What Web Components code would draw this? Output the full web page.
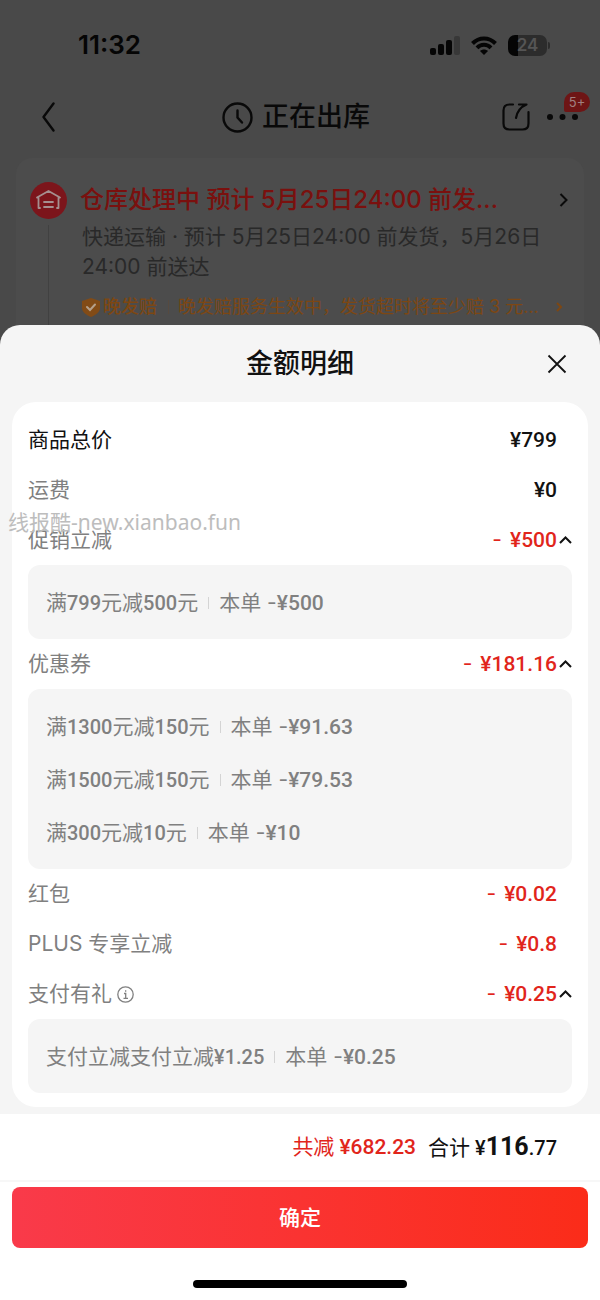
<!DOCTYPE html>
<html lang="zh-CN">
<head>
<meta charset="UTF-8">
<meta name="viewport" content="width=device-width, initial-scale=1">
<title>金额明细</title>
<style>
    body {
        margin: 0;
        background: #494949;
        font-family: Inter, "Noto Sans CJK SC", sans-serif;
        font-size: 21px;
        line-height: 30px;
        color: #111;
    }
</style>
</head>
<body>
<order-page></order-page>

<script>
// Numbers are set in a narrower face than the text round them
function withNumbers(text) {
    return text.replace(/[¥\d][\d.]*/g, '<span class="num">$&</span>');
}

const numStyle = `
    .num {
        font-family: Roboto, sans-serif;
        font-weight: 500;
    }
`;

const buttonReset = `
    button {
        margin: 0;
        padding: 0;
        border: 0;
        background: none;
        color: inherit;
        font: inherit;
        display: flex;
        align-items: center;
        cursor: pointer;
    }
    svg { display: block; flex: none; }
`;

class StatusBar extends HTMLElement {
    constructor() {
        super();
        this.attachShadow({ mode: 'open' });
    }

    connectedCallback() {
        this.shadowRoot.innerHTML = `
            <style>
                :host {
                    display: flex;
                    align-items: center;
                    justify-content: space-between;
                    height: 90px;
                    padding: 0 50px 0 78px;
                    color: #050505;
                }
                .time { font-size: 26px; font-weight: 600; }
                .signs { display: flex; align-items: center; gap: 11px; }
                .battery { display: flex; align-items: center; gap: 1px; }
                .cell {
                    box-sizing: border-box;
                    width: 39px;
                    height: 21px;
                    border-radius: 7px;
                    background: linear-gradient(90deg, #050505 10px, #2c2c2c 10px);
                    color: #555;
                    font-size: 17px;
                    font-weight: 600;
                    line-height: 21px;
                    text-align: center;
                }
                .tip { width: 2px; height: 7px; border-radius: 0 2px 2px 0; background: #2c2c2c; }
                svg { display: block; }
            </style>
            <span class="time">11:32</span>
            <div class="signs">
                <svg width="30" height="19" viewBox="0 0 30 19" fill="#050505">
                    <rect x="0" y="12" width="6" height="7" rx="2"/>
                    <rect x="8" y="8" width="6" height="11" rx="2"/>
                    <rect x="16" y="4" width="6" height="15" rx="2"/>
                    <rect x="24" y="0" width="6" height="19" rx="2" fill="#383838"/>
                </svg>
                <svg width="26" height="19" viewBox="0 0 26 19" fill="none" stroke="#050505" stroke-width="4">
                    <path d="M1.500 7.500C8 .8 18 .8 24.500 7.500"/>
                    <path d="M6 11.800c4-4 10-4 14 0"/>
                    <path d="M13 19l-4-4c2.300-2 5.700-2 8 0z" fill="#050505" stroke="none"/>
                </svg>
                <div class="battery"><div class="cell">24</div><div class="tip"></div></div>
            </div>
        `;
    }
}

class NavBar extends HTMLElement {
    constructor() {
        super();
        this.attachShadow({ mode: 'open' });
    }

    connectedCallback() {
        this.shadowRoot.innerHTML = `
            <style>
                ${buttonReset}
                :host {
                    display: grid;
                    grid-template-columns: 1fr auto 1fr;
                    align-items: center;
                    height: 54px;
                    padding: 0 22px 0 14px;
                    color: #090909;
                }
                .back { padding: 8px 28px; }
                h1 {
                    display: flex;
                    align-items: center;
                    gap: 9px;
                    margin: 0;
                    font-size: 27px;
                    font-weight: 500;
                    line-height: 40px;
                }
                .tools { display: flex; justify-content: flex-end; align-items: center; gap: 17px; }
                .more { position: relative; height: 28px; }
                .badge {
                    position: absolute;
                    left: 17px;
                    bottom: 19px;
                    width: 26px;
                    border-radius: 10px 10px 10px 2px;
                    background: #6e1515;
                    color: #a08080;
                    font-size: 13px;
                    line-height: 20px;
                    text-align: center;
                }
            </style>
            <button class="back" aria-label="返回">
                <svg width="13" height="30" viewBox="0 0 13 30" fill="none" stroke="currentColor" stroke-width="2.400" stroke-linecap="round" stroke-linejoin="round"><path d="M11.500 1.500L1.500 15l10 13.500"/></svg>
            </button>
            <h1>
                <svg width="31" height="31" viewBox="0 0 31 31" fill="none" stroke="currentColor" stroke-width="2.400" stroke-linecap="round"><circle cx="15.500" cy="15.500" r="14"/><path d="M15.500 8.500V15.500L20 20.500"/></svg>
                正在出库
            </h1>
            <div class="tools">
                <button aria-label="分享">
                    <svg width="28" height="28" viewBox="0 0 28 28" fill="none" stroke="currentColor" stroke-width="2.200" stroke-linecap="round" stroke-linejoin="round"><path d="M11 1.500H7.500Q1.500 1.500 1.500 7.500V20.500Q1.500 26.500 7.500 26.500H20.500Q26.500 26.500 26.500 20.500V9"/><path d="M17 1.500H24.500C18.500 4 15 9 14 15"/></svg>
                </button>
                <button class="more" aria-label="更多">
                    <svg width="31" height="6" viewBox="0 0 31 6" fill="currentColor"><circle cx="3" cy="3" r="3"/><circle cx="15.500" cy="3" r="3"/><circle cx="28" cy="3" r="3"/></svg>
                    <span class="badge">5+</span>
                </button>
            </div>
        `;
    }
}

class DeliveryCard extends HTMLElement {
    constructor() {
        super();
        this.attachShadow({ mode: 'open' });
    }

    connectedCallback() {
        this.shadowRoot.innerHTML = `
            <style>
                ${buttonReset}
                :host {
                    display: flex;
                    gap: 13px;
                    margin: 14px 16px 0;
                    padding: 24px 16px 0 14px;
                    border-radius: 16px 16px 0 0;
                    background: #4c4c4c;
                }
                .rail { display: flex; flex-direction: column; align-items: center; gap: 6px; }
                .rail i { flex: 1; width: 1px; background: #414141; }
                .body { flex: 1; min-width: 0; padding-bottom: 6px; }
                .title { display: flex; align-items: center; justify-content: space-between; }
                h2 {
                    margin: 0;
                    color: #7a100e;
                    font-size: 24px;
                    font-weight: 500;
                    line-height: 36px;
                    white-space: pre;
                }
                p { margin: 4px 0 13px 2px; color: #292929; }
                .late {
                    width: 100%;
                    padding-left: 2px;
                    box-sizing: border-box;
                    color: #7d4713;
                    font-size: 18px;
                    line-height: 24px;
                    white-space: nowrap;
                }
                .late b { margin-left: 3px; font-weight: 500; }
                .late i { width: 1px; height: 14px; margin: 0 9px 0 11px; background: #564a40; }
                .late .go { margin-left: auto; margin-right: 6px; }
            </style>
            <div class="rail">
                <svg width="37" height="37" viewBox="0 0 37 37" fill="none" stroke="#a58f8f" stroke-width="1.800" stroke-linecap="round" stroke-linejoin="round">
                    <circle cx="18.500" cy="18.500" r="18.500" fill="#7c151b" stroke="none"/>
                    <path d="M10 26H8.500V15.500L7 15.500L18.500 9L30 15.500H28.500V26H27M14 20H23M14 25H23"/>
                </svg>
                <i></i>
            </div>
            <div class="body">
                <div class="title">
                    <h2>仓库处理中 预计 5月25日24:00 前发...</h2>
                    <button aria-label="查看物流">
                        <svg width="9" height="14" viewBox="0 0 9 14" fill="none" stroke="#0a0a0a" stroke-width="2"><path d="M1.500 1L7.500 7L1.500 13"/></svg>
                    </button>
                </div>
                <p>快递运输 · 预计 5月25日24:00 前发货，5月26日24:00 前送达</p>
                <button class="late">
                    <svg width="18" height="19" viewBox="0 0 18 19"><path d="M9 0L18 3V10C18 14 14 17 9 19C4 17 0 14 0 10V3Z" fill="#824b16"/><path d="M5 9L8 12L13 6.500" fill="none" stroke="#b5a08a" stroke-width="2" stroke-linecap="round"/></svg>
                    <b>晚发赔</b><i></i><span>晚发赔服务生效中，发货超时将至少赔 3 元...</span>
                    <svg class="go" width="6" height="10" viewBox="0 0 6 10" fill="none" stroke="currentColor" stroke-width="2"><path d="M1 1L5 5L1 9"/></svg>
                </button>
            </div>
        `;
    }
}

class AmountRow extends HTMLElement {
    constructor() {
        super();
        this.attachShadow({ mode: 'open' });
    }

    connectedCallback() {
        const value = this.getAttribute('value');
        const minus = value.startsWith('-');
        const label = this.getAttribute('label');

        const info = this.hasAttribute('info') ? `
            <button class="info" aria-label="${label}说明">
                <svg width="17" height="17" viewBox="0 0 17 17" fill="none" stroke="currentColor" stroke-width="1.300"><circle cx="8.500" cy="8.500" r="7.700"/><path d="M7 7.500H8.700V12M6.500 12.300H11M8 5H9.300" /></svg>
            </button>` : '';
        const arrow = this.hasAttribute('open') ? `
            <button aria-label="收起${label}" aria-expanded="true">
                <svg width="13" height="8" viewBox="0 0 13 8" fill="none" stroke="#111" stroke-width="2"><path d="M1 7L6.500 1.500L12 7"/></svg>
            </button>` : '';

        this.shadowRoot.innerHTML = `
            <style>
                ${buttonReset}
                ${numStyle}
                :host {
                    display: flex;
                    align-items: center;
                    height: 50px;
                    color: #808080;
                }
                :host([strong]) { color: #111; }
                .label { flex: 1; display: flex; align-items: center; gap: 5px; }
                .value { display: flex; align-items: center; gap: 8px; color: ${minus ? '#e1251b' : '#111'}; }
                .arrow { display: flex; justify-content: flex-end; width: 15px; }
            </style>
            <span class="label">${label}${info}</span>
            <span class="value">${minus ? '<span>-</span>' : ''}<span class="num">${value.replace('-', '')}</span></span>
            <span class="arrow">${arrow}</span>
        `;
    }
}

class DetailBox extends HTMLElement {
    constructor() {
        super();
        this.attachShadow({ mode: 'open' });
        this.shadowRoot.innerHTML = `
            <style>
                :host {
                    display: block;
                    padding: 11px 18px 10px;
                    border-radius: 12px;
                    background: #f5f5f5;
                    color: #808080;
                }
            </style>
            <slot></slot>
        `;
    }
}

class DetailLine extends HTMLElement {
    constructor() {
        super();
        this.attachShadow({ mode: 'open' });
    }

    connectedCallback() {
        this.shadowRoot.innerHTML = `
            <style>
                ${numStyle}
                :host { display: flex; align-items: center; height: 53px; white-space: nowrap; }
                .rule .num { font-size: 20px; }
                i { width: 1px; height: 12px; margin: 0 10px; background: #d4d4d4; }
            </style>
            <span class="rule">${withNumbers(this.getAttribute('rule'))}</span>
            <i></i>
            <span>${withNumbers('本单 ' + this.getAttribute('value'))}</span>
        `;
    }
}

class AmountSheet extends HTMLElement {
    constructor() {
        super();
        this.attachShadow({ mode: 'open' });
        this.shadowRoot.innerHTML = `
            <style>
                ${buttonReset}
                :host {
                    display: flex;
                    flex-direction: column;
                    flex: 1;
                    position: relative;
                    border-radius: 20px 20px 0 0;
                    background: #f5f5f5;
                }
                header {
                    display: grid;
                    grid-template-columns: 1fr auto 1fr;
                    align-items: center;
                    height: 77px;
                    padding: 0 33px;
                }
                h2 { grid-column: 2; margin: 0; font-size: 27px; font-weight: 500; line-height: 40px; }
                header button { justify-self: end; }
                .list {
                    margin: 0 12px 7px;
                    padding: 13px 16px 14px;
                    border-radius: 24px;
                    background: #fff;
                }
                .mark {
                    position: absolute;
                    left: 8px;
                    top: 182px;
                    color: #bdbdbd;
                    font-family: "Noto Sans", "Noto Sans CJK SC", sans-serif;
                    font-size: 21px;
                    pointer-events: none;
                }
            </style>
            <header>
                <h2>金额明细</h2>
                <button aria-label="关闭">
                    <svg width="20" height="20" viewBox="0 0 20 20" fill="none" stroke="#111" stroke-width="1.800"><path d="M1.500 1.500L18.500 18.500M18.500 1.500L1.500 18.500"/></svg>
                </button>
            </header>
            <div class="list"><slot></slot></div>
            <slot name="footer"></slot>
            <span class="mark">线报酷-new.xianbao.fun</span>
        `;
    }
}

class TotalBar extends HTMLElement {
    constructor() {
        super();
        this.attachShadow({ mode: 'open' });
    }

    connectedCallback() {
        this.shadowRoot.innerHTML = `
            <style>
                ${numStyle}
                :host { display: block; flex: 1; background: #fff; }
                .total {
                    display: flex;
                    justify-content: flex-end;
                    align-items: center;
                    gap: 12px;
                    height: 66px;
                    padding: 0 43px 0 12px;
                    border-bottom: 2px solid #f7f7f7;
                }
                .cut { color: #e1251b; }
                .total > span { display: flex; align-items: baseline; gap: 5px; }
                .sum { font-size: 20px; }
                .big { font-size: 25px; font-weight: 700; }
                .action { padding: 5px 12px 32px; }
                button {
                    display: block;
                    width: 100%;
                    height: 61px;
                    border: 0;
                    border-radius: 8px;
                    background: linear-gradient(90deg, #f93a4a, #fb2c19);
                    color: #fff;
                    font: inherit;
                    font-weight: 500;
                    cursor: pointer;
                }
                .home { width: 214px; height: 8px; margin: 0 auto 12px; border-radius: 4px; background: #000; }
            </style>
            <div class="total">
                <span class="cut">共减<span class="num">¥682.23</span></span>
                <span>合计<span class="num sum">¥<span class="big">116</span>.77</span></span>
            </div>
            <div class="action"><button type="button">确定</button></div>
            <div class="home"></div>
        `;
    }
}

class OrderPage extends HTMLElement {
    constructor() {
        super();
        this.attachShadow({ mode: 'open' });
    }

    connectedCallback() {
        this.shadowRoot.innerHTML = `
            <style>
                :host { display: flex; flex-direction: column; min-height: 100vh; }
            </style>
            <status-bar></status-bar>
            <nav-bar></nav-bar>
            <delivery-card></delivery-card>
            <amount-sheet>
                <amount-row label="商品总价" value="¥799" strong></amount-row>
                <amount-row label="运费" value="¥0"></amount-row>
                <amount-row label="促销立减" value="-¥500" open></amount-row>
                <detail-box>
                    <detail-line rule="满799元减500元" value="-¥500"></detail-line>
                </detail-box>
                <amount-row label="优惠券" value="-¥181.16" open></amount-row>
                <detail-box>
                    <detail-line rule="满1300元减150元" value="-¥91.63"></detail-line>
                    <detail-line rule="满1500元减150元" value="-¥79.53"></detail-line>
                    <detail-line rule="满300元减10元" value="-¥10"></detail-line>
                </detail-box>
                <amount-row label="红包" value="-¥0.02"></amount-row>
                <amount-row label="PLUS 专享立减" value="-¥0.8"></amount-row>
                <amount-row label="支付有礼" value="-¥0.25" info open></amount-row>
                <detail-box>
                    <detail-line rule="支付立减支付立减¥1.25" value="-¥0.25"></detail-line>
                </detail-box>
                <total-bar slot="footer"></total-bar>
            </amount-sheet>
        `;
    }
}

customElements.define('status-bar', StatusBar);
customElements.define('nav-bar', NavBar);
customElements.define('delivery-card', DeliveryCard);
customElements.define('amount-row', AmountRow);
customElements.define('detail-box', DetailBox);
customElements.define('detail-line', DetailLine);
customElements.define('amount-sheet', AmountSheet);
customElements.define('total-bar', TotalBar);
customElements.define('order-page', OrderPage);
</script>
</body>
</html>
